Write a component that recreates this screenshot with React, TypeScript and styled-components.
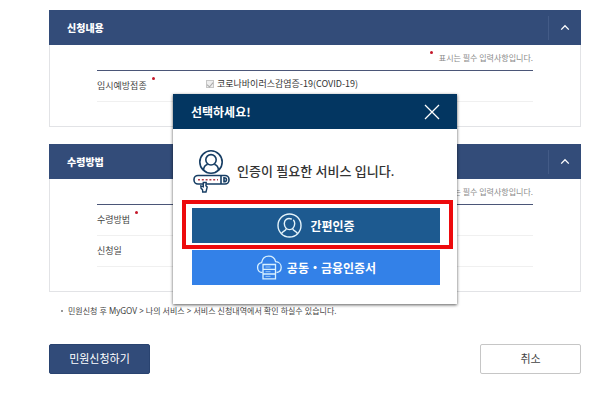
import React, { useState } from 'react';
import styled, { createGlobalStyle } from 'styled-components';

const GlobalStyle = createGlobalStyle`
  * { box-sizing: border-box; }
  body {
    margin: 0;
    background: #fff;
    color: #444;
    font-family: "Noto Sans CJK KR", "Noto Sans", sans-serif;
    font-size: 9px;
    line-height: 14px;
  }
  button { font-family: inherit; cursor: pointer; }
`;

const Page = styled.main`
  position: relative;
  padding: 10px 19px 34px 49px;
`;

const Panel = styled.section`
  border: 1px solid #e2e3e6;
  border-top: 0;

  & + & {
    margin-top: 17px;
  }
`;

const PanelHeader = styled.header`
  display: flex;
  align-items: center;
  justify-content: space-between;
  height: 35px;
  margin: 0 -1px;
  padding-left: 18px;
  background: #334c79;
  color: #fff;
`;

const PanelTitle = styled.h2`
  margin: 0;
  font-size: 10px;
  line-height: 16px;
  font-weight: 900;
`;

const FoldButton = styled.button`
  display: flex;
  align-items: center;
  justify-content: center;
  width: 33px;
  height: 24px;
  padding: 0;
  border: 0;
  border-left: 1px solid #435b87;
  background: none;
  color: #fff;
`;

const PanelBody = styled.div`
  padding: 0 47px 24px;
`;

const Dot = styled.span`
  width: 3px;
  height: 3px;
  border-radius: 2px;
  background: #c4182a;
`;

const Note = styled.p`
  display: flex;
  justify-content: flex-end;
  gap: 6px;
  height: 25px;
  margin: 0;
  padding-top: 6px;
  color: #8a8a8a;
  font-size: 8px;
`;

const Rows = styled.dl`
  margin: 0;
  border-top: 1px solid #4b5678;
`;

const Row = styled.div`
  display: flex;
  align-items: center;
  height: 31px;
  border-bottom: 1px solid #f0f0f0;
`;

const Term = styled.dt`
  display: flex;
  gap: 5px;
  width: 109px;
  line-height: 18px;
`;

const Detail = styled.dd`
  margin: 0;
  color: #333;
`;

const CheckLabel = styled.label`
  display: flex;
  align-items: center;
  gap: 3px;
  padding-bottom: 4px;
`;

const CheckBox = styled.input`
  appearance: none;
  display: grid;
  place-items: center;
  width: 8px;
  height: 8px;
  margin: 0;
  border: 1px solid #c6c6c6;
  background: #eee;
  &:checked::after {
    content: "";
    width: 3px;
    height: 5px;
    border: solid #aaa;
    border-width: 0 1px 1px 0;
    transform: rotate(40deg);
  }
`;

const FootNote = styled.p`
  display: flex;
  align-items: center;
  gap: 5px;
  margin: 12px 0 26px;
  padding-left: 12px;
  color: #444;
  font-family: "Noto Sans", "Noto Sans CJK KR", sans-serif;
  font-size: 8px;
  &::before {
    content: "";
    width: 2px;
    height: 2px;
    background: #999;
  }
`;

const Actions = styled.div`
  display: flex;
  justify-content: space-between;
`;

const ActionButton = styled.button<{ $primary?: boolean }>`
  width: 101px;
  height: 30px;
  padding: 0 0 2px;
  border: 1px solid ${(p) => (p.$primary ? '#294370' : '#c6c6c6')};
  border-radius: 2px;
  background: ${(p) => (p.$primary ? '#314b79' : '#fff')};
  color: ${(p) => (p.$primary ? '#fff' : '#444')};
  font-size: 11px;
  line-height: 16px;
`;

const Overlay = styled.div`
  position: absolute;
  inset: 0;
  display: flex;
  align-items: flex-start;
  justify-content: center;
  padding: 94px 19px 0 49px;
`;

const Dialog = styled.div`
  width: 284px;
  background: #fff;
  box-shadow: 0 1px 3px rgba(0, 0, 0, 0.65);
`;

const DialogHeader = styled.header`
  display: flex;
  align-items: center;
  justify-content: space-between;
  height: 35px;
  padding: 0 17px 0 18px;
  background: #033661;
  color: #fff;
`;

const DialogTitle = styled.h1`
  margin: 0;
  font-size: 12px;
  line-height: 18px;
  font-weight: 700;
`;

const CloseButton = styled.button`
  display: flex;
  padding: 0;
  border: 0;
  background: none;
  color: #fff;
`;

const Message = styled.div`
  display: flex;
  align-items: center;
  gap: 7px;
  height: 79px;
  padding: 5px 0 0 20px;
`;

const MessageText = styled.p`
  margin: 0;
  color: #333;
  font-family: "Noto Sans", "Noto Sans CJK KR", sans-serif;
  font-size: 13px;
  line-height: 20px;
  font-weight: 500;
`;

const Choices = styled.div`
  display: grid;
  gap: 7px;
  padding: 0 17px 19px 19px;
`;

const Choice = styled.div`
  position: relative;
`;

const ChoiceButton = styled.button<{ $tone: string; $gap: number }>`
  display: flex;
  align-items: center;
  justify-content: center;
  gap: ${(p) => p.$gap}px;
  width: 100%;
  height: 35px;
  padding: 0;
  border: 0;
  background: ${(p) => p.$tone};
  color: #fff;
  font-size: 12px;
  line-height: 18px;
  font-weight: 700;
`;

const Highlight = styled.span`
  position: absolute;
  inset: -8px -13px -6px -10px;
  border: 4px solid #ed0a0d;
  pointer-events: none;
`;

const ChevronIcon = () => (
  <svg width="10" height="7" viewBox="0 0 10 7" fill="none" stroke="currentColor" strokeWidth="1.3">
    <path d="M1.2 5.6 5 1.7l3.8 3.9" />
  </svg>
);

const CloseIcon = () => (
  <svg width="16" height="16" viewBox="0 0 16 16" fill="none" stroke="currentColor" strokeWidth="1.3">
    <path d="m1 1 14 14M15 1 1 15" />
  </svg>
);

const PersonIcon = () => (
  <svg width="25" height="25" viewBox="0 0 25 25" fill="none" stroke="#e4f3fa" strokeWidth="1.4" strokeLinecap="round">
    <circle cx="12.5" cy="12.5" r="11.5" />
    <path d="M14.300 6C10.300 4.600 7.300 7 7.300 10.600c0 3.300 2.300 6 5.200 6s5.200-2.700 5.200-6c0-1.400-.4-2.500-1.100-3.300" />
    <path d="M9.300 15.600c-.4 2.200-2.600 2-4.600 4.600M15.700 15.600c.4 2.200 2.600 2 4.600 4.600" />
  </svg>
);

const CloudIcon = () => (
  <svg width="26" height="25" viewBox="0 0 26 25" fill="none" stroke="#d9f1ff" strokeWidth="1.3">
    <path d="M6.500 17.500a5 5 0 0 1-.9-9.900C6.300 3.800 9 1.200 12.700 1.200c3.500 0 6.100 2.200 6.900 5.500 3.200.2 5.600 2.500 5.600 5.500 0 2.900-2.100 5-4.700 5.300" />
    <path d="M7 9.500h12.500v14.300H7zM7 14.300h12.500M7 19h12.500" />
    <path d="M9.500 12h5M9.500 16.700h5M9.500 21.400h5" strokeWidth="1" opacity=".6" />
  </svg>
);

const SignInIcon = () => (
  <svg width="37" height="43" viewBox="0 0 37 43" fill="none" stroke="#173e64" strokeWidth="1.6">
    <circle cx="18" cy="12" r="11.200" />
    <circle cx="18" cy="9.800" r="5.200" />
    <path d="M10.500 20.200c.2-3.300 1.700-5.300 4.200-6M25.500 20.200c-.2-3.300-1.700-5.300-4.200-6" />
    <rect x="1" y="25.500" width="35" height="8.500" rx="4" fill="#fff" />
    <path d="M28 25.500v8.500M31 27.800v4c2 0 2.500-1 2.500-2s-.5-2-2.500-2z" />
    <path d="M5 29.700h20" stroke="#b03a48" strokeDasharray="2 1.800" />
    <path d="M10.300 32.500v4.200l-2.500-.8.300 2.500 1.400 1.200.2 2.400h3.300l1.200-5-1.300-1.300.3-3.200z" fill="#fff" strokeWidth="1.400" />
  </svg>
);

interface SectionProps {
  title: string;
  children: React.ReactNode;
}

const Section = ({ title, children }: SectionProps) => (
  <Panel>
    <PanelHeader>
      <PanelTitle>{title}</PanelTitle>
      <FoldButton type="button" aria-label={`${title} 접기`}>
        <ChevronIcon />
      </FoldButton>
    </PanelHeader>
    <PanelBody>
      <Note>
        <Dot />
        표시는 필수 입력사항입니다.
      </Note>
      <Rows>{children}</Rows>
    </PanelBody>
  </Panel>
);

export default function App() {
  const [open, setOpen] = useState(true);
  return (
    <>
      <GlobalStyle />
      <Page>
        <Section title="신청내용">
          <Row>
            <Term>
              임시예방접종
              <Dot />
            </Term>
            <Detail>
              <CheckLabel>
                <CheckBox type="checkbox" defaultChecked disabled />
                코로나바이러스감염증-19(COVID-19)
              </CheckLabel>
            </Detail>
          </Row>
        </Section>
        <Section title="수령방법">
          <Row>
            <Term>
              수령방법
              <Dot />
            </Term>
          </Row>
          <Row>
            <Term>신청일</Term>
          </Row>
        </Section>
        <FootNote>민원신청 후 MyGOV &gt; 나의 서비스 &gt; 서비스 신청내역에서 확인 하실수 있습니다.</FootNote>
        <Actions>
          <ActionButton type="button" $primary>민원신청하기</ActionButton>
          <ActionButton type="button">취소</ActionButton>
        </Actions>
        {open && (
          <Overlay>
            <Dialog role="dialog" aria-labelledby="dialog-title">
              <DialogHeader>
                <DialogTitle id="dialog-title">선택하세요!</DialogTitle>
                <CloseButton type="button" aria-label="닫기" onClick={() => setOpen(false)}>
                  <CloseIcon />
                </CloseButton>
              </DialogHeader>
              <Message>
                <SignInIcon />
                <MessageText>인증이 필요한 서비스 입니다.</MessageText>
              </Message>
              <Choices>
                <Choice>
                  <ChoiceButton type="button" $tone="#1d5a90" $gap={8}>
                    <PersonIcon />
                    간편인증
                  </ChoiceButton>
                  <Highlight />
                </Choice>
                <Choice>
                  <ChoiceButton type="button" $tone="#3381e8" $gap={5}>
                    <CloudIcon />
                    공동・금융인증서
                  </ChoiceButton>
                </Choice>
              </Choices>
            </Dialog>
          </Overlay>
        )}
      </Page>
    </>
  );
}
